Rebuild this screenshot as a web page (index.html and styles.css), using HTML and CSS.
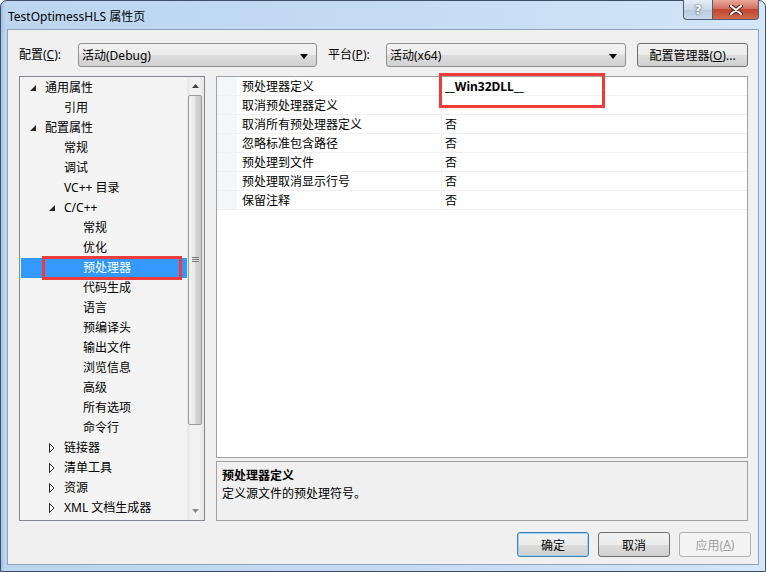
FILE: index.html
```html
<!DOCTYPE html>
<html>
<head>
<meta charset="utf-8">
<link rel="stylesheet" href="styles.css">
</head>
<body>
<div class="window">
  <div class="titlebar">
    <span class="title">TestOptimessHLS 属性页</span>
    <div class="caption-btns">
      <div class="cbtn help">?</div>
      <div class="cbtn close">
        <svg width="14" height="10" viewBox="0 0 14 10"><path d="M2 1 L12 9 M12 1 L2 9" stroke="#4a1a14" stroke-width="4" stroke-linecap="round"/><path d="M2 1 L12 9 M12 1 L2 9" stroke="#fff" stroke-width="2.2" stroke-linecap="round"/></svg>
      </div>
    </div>
  </div>
  <div class="client">
    <div class="toolbar">
      <span class="lbl lbl1">配置(<u>C</u>):</span>
      <div class="combo combo1"><span>活动(Debug)</span><svg class="drop" width="8" height="5" viewBox="0 0 8 5"><polygon points="0,0 8,0 4,5" fill="#000"/></svg></div>
      <span class="lbl lbl2">平台(<u>P</u>):</span>
      <div class="combo combo2"><span>活动(x64)</span><svg class="drop" width="8" height="5" viewBox="0 0 8 5"><polygon points="0,0 8,0 4,5" fill="#000"/></svg></div>
      <div class="btn mgr">配置管理器(<u>O</u>)...</div>
    </div>
    <div class="main">
      <div class="tree">
        <div class="tree-list">
          <div class="node l0"><span class="ic"><svg width="6" height="6" viewBox="0 0 6 6"><polygon points="6,0 6,6 0,6" fill="#262626"/></svg></span>通用属性</div>
          <div class="node l1"><span class="ic"></span>引用</div>
          <div class="node l0"><span class="ic"><svg width="6" height="6" viewBox="0 0 6 6"><polygon points="6,0 6,6 0,6" fill="#262626"/></svg></span>配置属性</div>
          <div class="node l1"><span class="ic"></span>常规</div>
          <div class="node l1"><span class="ic"></span>调试</div>
          <div class="node l1"><span class="ic"></span>VC++ 目录</div>
          <div class="node l1"><span class="ic"><svg width="6" height="6" viewBox="0 0 6 6"><polygon points="6,0 6,6 0,6" fill="#262626"/></svg></span>C/C++</div>
          <div class="node l2"><span class="ic"></span>常规</div>
          <div class="node l2"><span class="ic"></span>优化</div>
          <div class="node l2 sel"><span class="ic"></span>预处理器</div>
          <div class="node l2"><span class="ic"></span>代码生成</div>
          <div class="node l2"><span class="ic"></span>语言</div>
          <div class="node l2"><span class="ic"></span>预编译头</div>
          <div class="node l2"><span class="ic"></span>输出文件</div>
          <div class="node l2"><span class="ic"></span>浏览信息</div>
          <div class="node l2"><span class="ic"></span>高级</div>
          <div class="node l2"><span class="ic"></span>所有选项</div>
          <div class="node l2"><span class="ic"></span>命令行</div>
          <div class="node l1"><span class="ic"><svg width="6" height="10" viewBox="0 0 6 10"><polygon points="0.5,0.5 5,5 0.5,9.5" fill="#fff" stroke="#262626" stroke-width="1"/></svg></span>链接器</div>
          <div class="node l1"><span class="ic"><svg width="6" height="10" viewBox="0 0 6 10"><polygon points="0.5,0.5 5,5 0.5,9.5" fill="#fff" stroke="#262626" stroke-width="1"/></svg></span>清单工具</div>
          <div class="node l1"><span class="ic"><svg width="6" height="10" viewBox="0 0 6 10"><polygon points="0.5,0.5 5,5 0.5,9.5" fill="#fff" stroke="#262626" stroke-width="1"/></svg></span>资源</div>
          <div class="node l1"><span class="ic"><svg width="6" height="10" viewBox="0 0 6 10"><polygon points="0.5,0.5 5,5 0.5,9.5" fill="#fff" stroke="#262626" stroke-width="1"/></svg></span>XML 文档生成器</div>
          <div class="mark mark1"></div>
        </div>
        <div class="vscroll">
          <div class="sarrow"><svg width="7" height="4" viewBox="0 0 7 4"><polygon points="3.5,0 7,4 0,4" fill="#444"/></svg></div>
          <div class="thumb"><svg width="7" height="6" viewBox="0 0 7 6"><path d="M0 0.5 H7 M0 2.5 H7 M0 4.5 H7" stroke="#7a7a7a" stroke-width="1"/></svg></div>
          <div class="track"></div>
          <div class="sarrow"><svg width="7" height="4" viewBox="0 0 7 4"><polygon points="0,0 7,0 3.5,4" fill="#8a8a8a"/></svg></div>
        </div>
      </div>
      <div class="right">
        <div class="grid">
          <div class="prow"><span class="strip"></span><span class="pname">预处理器定义</span><span class="pval bold">__Win32DLL__</span></div>
          <div class="prow"><span class="strip"></span><span class="pname">取消预处理器定义</span><span class="pval"></span></div>
          <div class="prow"><span class="strip"></span><span class="pname">取消所有预处理器定义</span><span class="pval">否</span></div>
          <div class="prow"><span class="strip"></span><span class="pname">忽略标准包含路径</span><span class="pval">否</span></div>
          <div class="prow"><span class="strip"></span><span class="pname">预处理到文件</span><span class="pval">否</span></div>
          <div class="prow"><span class="strip"></span><span class="pname">预处理取消显示行号</span><span class="pval">否</span></div>
          <div class="prow"><span class="strip"></span><span class="pname">保留注释</span><span class="pval">否</span></div>
          <div class="mark mark2"></div>
        </div>
        <div class="desc">
          <div class="desc-title">预处理器定义</div>
          <div class="desc-text">定义源文件的预处理符号。</div>
        </div>
      </div>
    </div>
    <div class="buttons">
      <div class="btn dlg default">确定</div>
      <div class="btn dlg">取消</div>
      <div class="btn dlg disabled">应用(<u>A</u>)</div>
    </div>
  </div>
</div>
</body>
</html>
```

FILE: styles.css
```css
* { box-sizing: border-box; }
html, body { margin: 0; padding: 0; background: #ffffff; }
body {
  font-family: "Noto Sans", "Noto Sans CJK SC", sans-serif;
  font-size: 12px;
  color: #000;
}
u { text-decoration: underline; text-underline-offset: 1px; }

.window {
  width: 766px;
  height: 572px;
  border: 1px solid #3c4f66;
  border-radius: 7px 7px 0 0;
  background: linear-gradient(90deg, #9fbfe0 0px, #bcd6f0 4px, #c3dbf3 50%, #d4e6f8 100%);
  display: flex;
  flex-direction: column;
  padding: 0 6px 6px 6px;
}

.titlebar {
  height: 28px;
  display: flex;
  align-items: flex-start;
  position: relative;
}
.title {
  margin-top: 9px;
  margin-left: 1px;
  line-height: 14px;
  font-size: 12px;
  color: #000;
}
.caption-btns {
  margin-left: auto;
  display: flex;
  margin-top: -1px;
  margin-right: 0;
}
.cbtn {
  height: 20px;
  border: 1px solid #4d5f78;
  border-top: none;
  display: flex;
  align-items: center;
  justify-content: center;
}
.help {
  width: 29px;
  border-radius: 0 0 0 4px;
  border-right: none;
  background: linear-gradient(#e6eef7, #c9d8e8 50%, #b6c8dc 51%, #cbdbec);
  color: #fff;
  font-weight: bold;
  font-size: 13px;
  font-family: "DejaVu Sans", sans-serif;
  text-shadow: 0 0 2px #3e4f66, 0 0 1px #3e4f66;
}
.close {
  width: 47px;
  border-radius: 0 0 4px 0;
  background: linear-gradient(#e9a99b, #d3705f 45%, #c2462f 50%, #d06a4a 100%);
}

.client {
  flex: 1;
  background: #f0f0f0;
  border: 1px solid #8da2b9;
  display: flex;
  flex-direction: column;
  padding: 13px 7px 7px 11px;
}

.toolbar {
  height: 24px;
  display: flex;
  align-items: center;
}
.lbl { line-height: 24px; white-space: nowrap; }
.lbl1 { width: 59px; }
.lbl2 { width: 58px; }
.combo {
  height: 24px;
  border: 1px solid #8e8f8f;
  border-radius: 3px;
  background: linear-gradient(#f3f3f3, #ebebeb 50%, #dddddd 51%, #d1d1d1);
  display: flex;
  align-items: center;
  padding: 0 0 0 3px;
  position: relative;
}
.combo1 { width: 239px; margin-right: 11px; }
.combo2 { width: 240px; margin-right: 11px; }
.drop { position: absolute; right: 8px; top: 10px; }

.btn {
  height: 24px;
  border: 1px solid #707070;
  border-radius: 3px;
  background: linear-gradient(#f2f2f2, #ebebeb 50%, #dddddd 51%, #cfcfcf);
  display: flex;
  align-items: center;
  justify-content: center;
  white-space: nowrap;
}
.mgr { width: 111px; }

.main {
  margin-top: 9px;
  height: 445px;
  display: flex;
  gap: 11px;
}
.tree {
  width: 186px;
  border: 1px solid #828790;
  background: #f4f4f4;
  display: flex;
}
.tree-list {
  flex: 1;
  padding-top: 1px;
  position: relative;
}
.node {
  height: 20px;
  line-height: 20px;
  display: flex;
  align-items: center;
  white-space: nowrap;
}
.node .ic {
  width: 19px;
  height: 20px;
  display: flex;
  align-items: center;
  padding-left: 4px;
  flex: none;
}
.l0 { padding-left: 6px; }
.l1 { padding-left: 25px; }
.l2 { padding-left: 44px; }
.sel { background: #3399ff; color: #fff; margin-left: 1px; padding-left: 43px; }

.mark {
  position: absolute;
  border: 3px solid #ef3b3b;
}
.mark1 { left: 22px; top: 179px; width: 140px; height: 24px; }

.vscroll {
  width: 17px;
  display: flex;
  flex-direction: column;
  background: linear-gradient(90deg, #e6e6e6, #f2f2f2 30%, #f2f2f2 70%, #e6e6e6);
}
.sarrow {
  height: 18px;
  display: flex;
  align-items: center;
  justify-content: center;
}
.thumb {
  height: 330px;
  margin: 0 2px 0 1px;
  border: 1px solid #9a9a9a;
  border-radius: 2px;
  background: linear-gradient(90deg, #f4f4f4, #eaeaea 45%, #d6d6d6 55%, #cacaca);
  display: flex;
  align-items: center;
  justify-content: center;
}
.track { flex: 1; }

.right {
  width: 532px;
  display: flex;
  flex-direction: column;
  gap: 3px;
}
.grid {
  height: 382px;
  border: 1px solid #a0a0a0;
  background: #fff;
  position: relative;
}
.prow {
  height: 19px;
  display: flex;
  border-bottom: 1px solid #f0f0f0;
}
.strip { width: 20px; background: #f3f6fb; flex: none; }
.pname {
  width: 205px;
  padding-left: 5px;
  padding-top: 1px;
  line-height: 18px;
  border-right: 1px solid #f0f0f0;
  flex: none;
}
.pval { padding-left: 3px; padding-top: 1px; line-height: 18px; flex: 1; }
.bold { font-weight: bold; }
.mark2 { left: 222px; top: -4px; width: 166px; height: 35px; }

.desc {
  flex: 1;
  border: 1px solid #a0a0a0;
  background: #f0f0f0;
  padding: 5px 5px;
}
.desc-title { font-weight: bold; line-height: 18px; }
.desc-text { line-height: 18px; }

.buttons {
  margin-top: 11px;
  display: flex;
  justify-content: flex-end;
  gap: 9px;
}
.dlg { width: 72px; height: 25px; }
.default {
  border-color: #3c7fb1;
  box-shadow: inset 0 0 0 1px #9ad7f6;
}
.disabled {
  border-color: #adb2b5;
  background: #f4f4f4;
  color: #a0a0a0;
}
```
